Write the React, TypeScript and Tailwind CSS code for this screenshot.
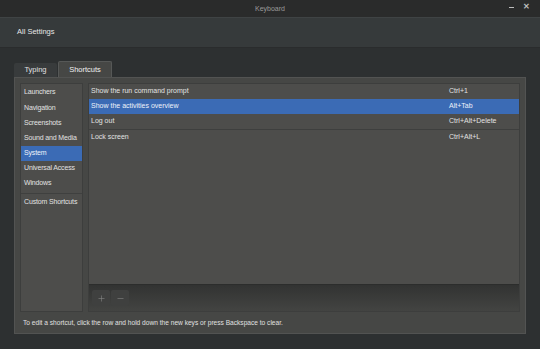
import { Plus, Minus } from 'lucide-react';

const categories = ['Launchers', 'Navigation', 'Screenshots', 'Sound and Media', 'System', 'Universal Access', 'Windows'];

const shortcuts = [
  { name: 'Show the run command prompt', keys: 'Ctrl+1' },
  { name: 'Show the activities overview', keys: 'Alt+Tab', selected: true },
  { name: 'Log out', keys: 'Ctrl+Alt+Delete' },
];

export default function App() {
  return (
    <div className="w-[540px] h-[349px] bg-[#2d3031] flex flex-col overflow-hidden text-[#e4e4e4] font-['Liberation_Sans',sans-serif]">
      {/* Title bar */}
      <div className="h-[17px] bg-[#2a2b2b] flex items-center relative shrink-0">
        <div className="flex-1 text-center text-[7px] text-[#9a9a9a] pt-[1px]">Keyboard</div>
        <div className="absolute right-[10px] top-[3px] flex items-center gap-[9px] text-[#bdbdbd]">
          <div className="w-[5px] h-[1px] bg-[#bdbdbd]" />
          <span className="text-[8px] font-bold leading-none">✕</span>
        </div>
      </div>

      {/* Header */}
      <div className="h-[31px] bg-[#363a3b] border-b border-[#2a2c2d] flex items-center px-[17px] shrink-0 shadow-[inset_0_1px_0_#3f4344]">
        <span className="text-[7.5px] text-[#e6e6e6]">All Settings</span>
      </div>

      {/* Body */}
      <div className="flex-1 flex flex-col px-[14px] pt-[14px] pb-[15px]">
        {/* Tabs */}
        <div className="flex items-end h-[15px]">
          <div className="h-[14px] w-[43px] flex items-center justify-center text-[7.5px] text-[#e0e0e0] bg-[#383b3c] rounded-t-[2px]">
            Typing
          </div>
          <div className="h-[16px] w-[54px] ml-[1px] flex items-center justify-center text-[7.5px] text-[#f0f0f0] bg-[#464745] border-t border-x border-[#565857] rounded-t-[2px]">
            Shortcuts
          </div>
        </div>

        {/* Notebook page */}
        <div className="flex-1 bg-[#464745] border border-[#525352] flex flex-col px-[5px] pt-[5px]">
          <div className="flex gap-[5px] h-[229px]">
            {/* Category list */}
            <div className="w-[63px] bg-[#4d4d4b] border border-[#3d3e3d] flex flex-col pt-[1px] whitespace-nowrap tracking-[-0.15px]">
              {categories.map((c) => (
                <div
                  key={c}
                  className={
                    c === 'System'
                      ? 'h-[15.2px] flex items-center px-[3px] text-[7px] bg-[#3b6bb5] text-[#eef2fa]'
                      : 'h-[15.2px] flex items-center px-[3px] text-[7px] text-[#e2e2e2]'
                  }
                >
                  {c}
                </div>
              ))}
              <div className="h-[2px] border-t border-[#3f403f] mt-[2px]" />
              <div className="h-[14px] flex items-center px-[3px] text-[7px] text-[#e2e2e2]">Custom Shortcuts</div>
            </div>

            {/* Shortcut list */}
            <div className="flex-1 flex flex-col border border-[#3d3e3d]">
              <div className="flex-1 bg-[#4d4d4b] flex flex-col">
                {shortcuts.map((s) => (
                  <div
                    key={s.name}
                    className={
                      s.selected
                        ? 'h-[15px] flex items-center justify-between pl-[2px] text-[7px] bg-[#3b6bb5] text-[#eef2fa]'
                        : 'h-[15px] flex items-center justify-between pl-[2px] text-[7px] text-[#e2e2e2]'
                    }
                  >
                    <span>{s.name}</span>
                    <span className="w-[70px]">{s.keys}</span>
                  </div>
                ))}
                <div className="border-t border-[#3e3f3e] h-[15px] flex items-center justify-between pl-[2px] text-[7px] text-[#e2e2e2]">
                  <span>Lock screen</span>
                  <span className="w-[70px]">Ctrl+Alt+L</span>
                </div>
              </div>
              {/* Toolbar */}
              <div className="h-[27px] bg-gradient-to-b from-[#323332] to-[#434442] border-t border-[#2c2d2c] flex items-center px-[3px] gap-[1px]">
                <div className="w-[18px] h-[16px] flex items-center justify-center bg-[#3f403f] rounded-[2px] text-[#8a8a8a]">
                  <Plus size={9} strokeWidth={1.5} />
                </div>
                <div className="w-[18px] h-[16px] flex items-center justify-center bg-[#3f403f] rounded-[2px] text-[#8a8a8a]">
                  <Minus size={9} strokeWidth={1.5} />
                </div>
              </div>
            </div>
          </div>

          {/* Footer hint */}
          <div className="flex-1 flex items-center pl-[3px] text-[6.6px] text-[#e0e0e0]">
            To edit a shortcut, click the row and hold down the new keys or press Backspace to clear.
          </div>
        </div>
      </div>
    </div>
  );
}
